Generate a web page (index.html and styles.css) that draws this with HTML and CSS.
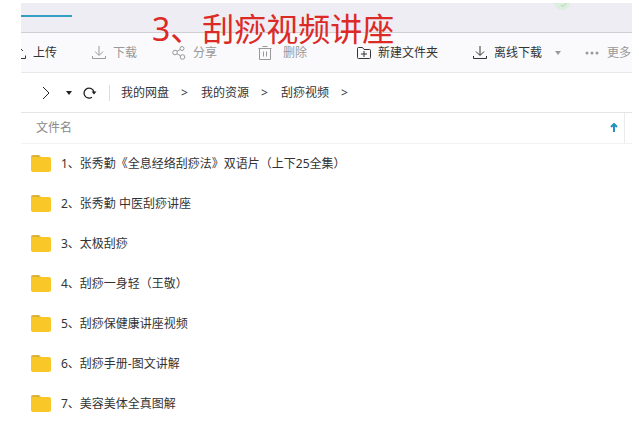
FILE: index.html
```
<!DOCTYPE html>
<html lang="zh-CN">
<head>
  <meta charset="utf-8">
  <title>刮痧视频讲座</title>
  <link rel="stylesheet" href="styles.css">
</head>
<body>
  <h1 class="caption">3、刮痧视频讲座</h1>
  <div class="window">
    <div class="titlebar">
      <div class="active-tab"></div>
      <svg class="badge" width="20" height="8" viewBox="0 0 20 8"><circle cx="10" cy="-1" r="8" fill="#dceedd"/><path d="M9 2l2 1.500 3-3" fill="none" stroke="#a9d5ac"/></svg>
    </div>

    <div class="toolbar">
      <button class="tool upload">
        <svg class="icon" viewBox="0 0 14 14"><path d="M7 10V1M3 5l4-4 4 4M.5 9.500v3h13v-3"/></svg>
        上传
      </button>
      <button class="tool" disabled>
        <svg class="icon" viewBox="0 0 14 14"><path d="M7 0v9M3 5.500l4 4 4-4M.5 10v2.500h13V10"/></svg>
        下载
      </button>
      <button class="tool" disabled>
        <svg class="icon" viewBox="0 0 14 14"><circle cx="3" cy="6.500" r="2.300"/><circle cx="10" cy="2.500" r="2"/><circle cx="10.500" cy="11" r="2.300"/><path d="M5 5.400l3.200-1.900M5 7.800l3.500 2"/></svg>
        分享
      </button>
      <button class="tool delete" disabled>
        <svg class="icon" viewBox="0 0 14 14"><path d="M.5 2.500h13M4.500.5h5M1.500 2.500v11h11v-11M5.500 5.500v5M8.500 5.500v5"/></svg>
        删除
      </button>
      <button class="tool new-folder">
        <svg class="icon" viewBox="0 0 14 14"><path d="M1.500 1.500h4l1.500 2h5.500q1 0 1 1v7q0 1-1 1h-11q-1 0-1-1v-9q0-1 1-1zM7 5v6M4 8h6"/></svg>
        新建文件夹
      </button>
      <button class="tool">
        <svg class="icon" viewBox="0 0 14 14"><path d="M7 0v9M3 5.500l4 4 4-4M.5 10v2.500h13V10"/></svg>
        离线下载
        <svg class="caret" width="8" height="4" viewBox="0 0 8 4"><path d="M1 0h6L4 4z"/></svg>
      </button>
      <button class="tool more" disabled>
        <svg class="icon dots" viewBox="0 0 14 14"><circle cx="2" cy="7" r="1.500"/><circle cx="7" cy="7" r="1.500"/><circle cx="12" cy="7" r="1.500"/></svg>
        更多
      </button>
    </div>

    <div class="pathbar">
      <button class="nav" aria-label="前进">
        <svg width="8" height="14" viewBox="0 0 8 14"><path d="M1 1l6 6-6 6"/></svg>
      </button>
      <button class="nav history" aria-label="历史">
        <svg width="6" height="4" viewBox="0 0 6 4"><path class="solid" d="M0 0h6L3 4z"/></svg>
      </button>
      <button class="nav refresh" aria-label="刷新">
        <svg width="14" height="12" viewBox="0 0 14 12"><path d="M9 10.200A5 5 0 1 1 11 5"/><path class="solid" d="M8.500 4.500h5L11 7.500z"/></svg>
      </button>
      <nav class="crumbs">
        <a href="#">我的网盘</a><span>&gt;</span>
        <a href="#">我的资源</a><span>&gt;</span>
        <a href="#">刮痧视频</a><span>&gt;</span>
      </nav>
    </div>

    <table class="files">
      <thead>
        <tr>
          <th>
            <div class="column-head">
              文件名
              <svg width="8" height="10" viewBox="0 0 8 10"><path d="M4 9V1M1 4l3-3 3 3"/></svg>
            </div>
          </th>
          <th class="next-column"></th>
        </tr>
      </thead>
      <tbody>
        <tr><td colspan="2"><div class="file"><svg class="folder" viewBox="0 0 20 18"><path class="tab" d="M0 2q0-2 2-2h6l2 2v4H0z"/><path d="M0 3q0-1 1-1h17q2 0 2 2v11q0 2-2 2H2q-2 0-2-2z"/></svg>1、张秀勤《全息经络刮痧法》双语片（上下25全集）</div></td></tr>
        <tr><td colspan="2"><div class="file"><svg class="folder" viewBox="0 0 20 18"><path class="tab" d="M0 2q0-2 2-2h6l2 2v4H0z"/><path d="M0 3q0-1 1-1h17q2 0 2 2v11q0 2-2 2H2q-2 0-2-2z"/></svg>2、张秀勤 中医刮痧讲座</div></td></tr>
        <tr><td colspan="2"><div class="file"><svg class="folder" viewBox="0 0 20 18"><path class="tab" d="M0 2q0-2 2-2h6l2 2v4H0z"/><path d="M0 3q0-1 1-1h17q2 0 2 2v11q0 2-2 2H2q-2 0-2-2z"/></svg>3、太极刮痧</div></td></tr>
        <tr><td colspan="2"><div class="file"><svg class="folder" viewBox="0 0 20 18"><path class="tab" d="M0 2q0-2 2-2h6l2 2v4H0z"/><path d="M0 3q0-1 1-1h17q2 0 2 2v11q0 2-2 2H2q-2 0-2-2z"/></svg>4、刮痧一身轻（王敬）</div></td></tr>
        <tr><td colspan="2"><div class="file"><svg class="folder" viewBox="0 0 20 18"><path class="tab" d="M0 2q0-2 2-2h6l2 2v4H0z"/><path d="M0 3q0-1 1-1h17q2 0 2 2v11q0 2-2 2H2q-2 0-2-2z"/></svg>5、刮痧保健康讲座视频</div></td></tr>
        <tr><td colspan="2"><div class="file"><svg class="folder" viewBox="0 0 20 18"><path class="tab" d="M0 2q0-2 2-2h6l2 2v4H0z"/><path d="M0 3q0-1 1-1h17q2 0 2 2v11q0 2-2 2H2q-2 0-2-2z"/></svg>6、刮痧手册-图文讲解</div></td></tr>
        <tr><td colspan="2"><div class="file"><svg class="folder" viewBox="0 0 20 18"><path class="tab" d="M0 2q0-2 2-2h6l2 2v4H0z"/><path d="M0 3q0-1 1-1h17q2 0 2 2v11q0 2-2 2H2q-2 0-2-2z"/></svg>7、美容美体全真图解</div></td></tr>
      </tbody>
    </table>
  </div>
</body>
</html>
```

FILE: styles.css
```
* {
  box-sizing: border-box;
}

body {
  margin: 0;
  padding: 3px 7px 0 21px;
  background: #fff;
  color: #333;
  font-family: "Noto Sans", "Noto Sans CJK SC", sans-serif;
  font-size: 12px;
  line-height: 20px;
}

button {
  padding: 0;
  border: none;
  background: none;
  color: inherit;
  font: inherit;
}

svg {
  flex: none;
}

/* Red caption over the window */
.caption {
  position: absolute;
  top: 9px;
  left: 152px;
  margin: 0;
  color: #dc2a26;
  font-size: 32px;
  font-weight: 400;
  line-height: 40px;
  white-space: nowrap;
}

.window {
  overflow: hidden;
}

.titlebar {
  display: flex;
  justify-content: space-between;
  height: 30px;
  padding-right: 60px;
  background: #eeedf3;
  border-bottom: 1px solid #d0d0d4;
}

.active-tab {
  width: 51px;
  height: 14px;
  border-bottom: 2px solid #319fc4;
}

/* Toolbar */
.toolbar {
  display: flex;
  align-items: center;
  gap: 35px;
  height: 40px;
  background: #fafafc;
  border-bottom: 1px solid #e8e8ea;
}

.tool {
  display: flex;
  flex: none;
  align-items: center;
  gap: 7px;
  white-space: nowrap;
}

.tool:disabled {
  color: #999;
}

.icon {
  width: 14px;
  height: 14px;
  fill: none;
  stroke: currentColor;
}

.upload {
  margin-left: -9px;
}

.delete {
  gap: 11px;
  margin-left: 6px;
}

.new-folder {
  margin-left: 15px;
}

.caret {
  margin-left: 5px;
  fill: #999;
}

.more {
  gap: 8px;
  margin-left: -12px;
}

.dots {
  fill: currentColor;
  stroke: none;
}

/* Path bar */
.pathbar {
  display: flex;
  align-items: center;
  height: 40px;
  padding-left: 21px;
  border-bottom: 1px solid #e4e4e6;
}

.nav {
  display: flex;
}

.nav path {
  fill: none;
  stroke: #222;
}

.nav .solid {
  fill: #222;
  stroke: none;
}

.history {
  margin-left: 16px;
}

.refresh {
  margin: 0 12px 0 11px;
}

.refresh path {
  stroke-width: 1.300;
}

.crumbs {
  display: flex;
  gap: 12px;
  height: 16px;
  padding-left: 11px;
  border-left: 1px solid #ddd;
  line-height: 16px;
}

.crumbs a {
  color: #333;
  text-decoration: none;
}

.crumbs span {
  width: 8px;
}

/* File list */
.files {
  width: 100%;
  border-collapse: collapse;
}

.files th,
.files td {
  padding: 0;
}

.files th {
  height: 30px;
  border-bottom: 1px solid #f2f2f2;
  color: #888;
  font-weight: 400;
  text-align: left;
}

.files .next-column {
  width: 8px;
  border-left: 1px solid #ebebeb;
}

.column-head {
  display: flex;
  align-items: center;
  justify-content: space-between;
  padding: 0 6px 0 15px;
}

.column-head path {
  fill: none;
  stroke: #258fbd;
  stroke-width: 2;
}

.file {
  display: flex;
  align-items: center;
  gap: 10px;
  height: 40px;
  padding-left: 10px;
}

.folder {
  width: 20px;
  height: 18px;
  fill: #f9c828;
}

.folder .tab {
  fill: #d9b340;
}
```
